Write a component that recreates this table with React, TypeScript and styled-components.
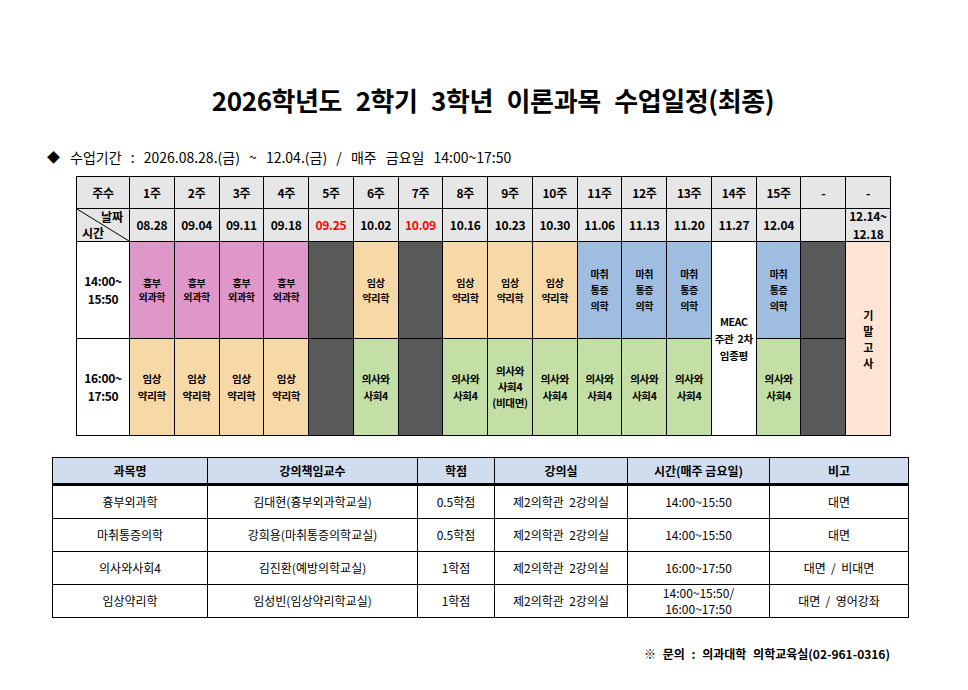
import React from "react";
import styled, { createGlobalStyle } from "styled-components";

const GlobalStyle = createGlobalStyle`
  html, body {
    margin: 0;
    padding: 0;
    background: #ffffff;
  }
  body {
    font-family: "Noto Sans CJK KR", "Noto Sans", sans-serif;
    color: #000000;
  }
`;

const PINK = "#df96c9";
const TAN = "#f6d9a6";
const BLUE = "#9fbde1";
const GREEN = "#c4dfa6";
const DARK = "#595959";
const PEACH = "#fde4d5";
const HEAD = "#e6e6e6";

const Page = styled.div`
  width: 968px;
  min-height: 690px;
  display: flex;
  flex-direction: column;
  padding-top: 86px;
  box-sizing: border-box;
`;

const Title = styled.h1`
  margin: 0;
  padding-left: 18px;
  font-size: 26px;
  line-height: 28px;
  font-weight: 700;
  text-align: center;
  word-spacing: 8px;
  letter-spacing: -0.4px;
`;

const Period = styled.div`
  margin-top: 33px;
  padding-left: 47px;
  font-size: 14px;
  line-height: 20px;
  word-spacing: 6px;
  display: flex;
  align-items: center;
  gap: 10px;
`;

const Diamond = styled.span`
  font-size: 13px;
`;

const Sheet = styled.div`
  margin-top: 9px;
  margin-left: 76px;
  width: 815px;
  box-sizing: border-box;
  display: grid;
  grid-template-columns: 52px repeat(17, 1fr);
  grid-template-rows: 31px 32px 96px 96px;
  gap: 1px;
  background: #000000;
  border: 1px solid #000000;
`;

const Cell = styled.div<{
  $bg: string;
  $span?: boolean;
  $color?: string;
  $size?: number;
  $lh?: number;
}>`
  background: ${(p) => p.$bg};
  color: ${(p) => p.$color || "#000000"};
  grid-row: ${(p) => (p.$span ? "span 2" : "auto")};
  display: flex;
  align-items: center;
  justify-content: center;
  text-align: center;
  white-space: pre-wrap;
  font-weight: 700;
  font-size: ${(p) => p.$size || 12}px;
  line-height: ${(p) => p.$lh || 16}px;
  letter-spacing: -0.3px;
`;

const CornerCell = styled.div`
  position: relative;
  background: ${HEAD};
  display: flex;
  flex-direction: column;
  justify-content: space-between;
  padding: 0 6px 0 5px;
  font-size: 12px;
  font-weight: 700;
  line-height: 14px;
  overflow: hidden;
`;

const CornerTop = styled.span`
  align-self: flex-end;
  margin-top: 1px;
`;

const CornerBottom = styled.span`
  align-self: flex-start;
  margin-bottom: 1px;
`;

const Slash = styled.svg`
  position: absolute;
  inset: 0;
  width: 100%;
  height: 100%;
`;

const InfoTable = styled.table`
  margin-top: 21px;
  margin-left: 52px;
  width: 856px;
  border-collapse: collapse;
  table-layout: fixed;
  font-size: 12px;
`;

const Col = styled.col<{ $w: number }>`
  width: ${(p) => p.$w}px;
`;

const Th = styled.th`
  background: #d0ddee;
  height: 25px;
  padding: 0;
  font-weight: 700;
  border: 1px solid #000000;
  border-bottom: 3px solid #000000;
`;

const Td = styled.td`
  height: 32px;
  padding: 0;
  text-align: center;
  border: 1px solid #000000;
  white-space: pre-wrap;
  line-height: 16px;
`;

const Footer = styled.div`
  margin-top: 26px;
  padding-right: 78px;
  text-align: right;
  font-size: 12px;
  font-weight: 700;
  line-height: 20px;
  word-spacing: 4px;
`;

type Slot = { text?: string; bg: string; span?: boolean; size?: number; lh?: number };

const weeks = ["1주", "2주", "3주", "4주", "5주", "6주", "7주", "8주", "9주", "10주", "11주", "12주", "13주", "14주", "15주", "-", "-"];
const dates = ["08.28", "09.04", "09.11", "09.18", "09.25", "10.02", "10.09", "10.16", "10.23", "10.30", "11.06", "11.13", "11.20", "11.27", "12.04", "", "12.14~\n12.18"];
const redDates = ["09.25", "10.09"];

const chest: Slot = { text: "흉부\n외과학", bg: PINK, size: 10, lh: 14 };
const pharmTop: Slot = { text: "임상\n약리학", bg: TAN, size: 10, lh: 15 };
const pharmBottom: Slot = { text: "임상\n약리학", bg: TAN, size: 10.5, lh: 17 };
const pain: Slot = { text: "마취\n통증\n의학", bg: BLUE, size: 10, lh: 16 };
const society: Slot = { text: "의사와\n사회4", bg: GREEN, size: 10.5, lh: 17 };
const dark: Slot = { bg: DARK };

const slotOne: Slot[] = [
  chest, chest, chest, chest,
  dark, pharmTop, dark, pharmTop, pharmTop, pharmTop,
  pain, pain, pain,
  { text: "MEAC\n주관  2차\n임종평", bg: "#ffffff", span: true, size: 10.5, lh: 17 },
  pain, dark,
  { text: "기\n말\n고\n사", bg: PEACH, span: true, size: 11, lh: 16 },
];

const slotTwo: Slot[] = [
  pharmBottom, pharmBottom, pharmBottom, pharmBottom,
  dark, society, dark, society,
  { text: "의사와\n사회4\n(비대면)", bg: GREEN, size: 10.5, lh: 16 },
  society, society, society, society,
  society, dark,
];

const courses = [
  ["흉부외과학", "김대현(흉부외과학교실)", "0.5학점", "제2의학관  2강의실", "14:00~15:50", "대면"],
  ["마취통증의학", "강희용(마취통증의학교실)", "0.5학점", "제2의학관  2강의실", "14:00~15:50", "대면"],
  ["의사와사회4", "김진환(예방의학교실)", "1학점", "제2의학관  2강의실", "16:00~17:50", "대면  /  비대면"],
  ["임상약리학", "임성빈(임상약리학교실)", "1학점", "제2의학관  2강의실", "14:00~15:50/\n16:00~17:50", "대면  /  영어강좌"],
];

const SlotRow: React.FC<{ label: string; slots: Slot[] }> = ({ label, slots }) => (
  <>
    <Cell $bg="#ffffff" $size={12} $lh={18}>{label}</Cell>
    {slots.map((s, i) => (
      <Cell key={i} $bg={s.bg} $span={s.span} $size={s.size} $lh={s.lh}>
        {s.text}
      </Cell>
    ))}
  </>
);

export default function App() {
  return (
    <Page>
      <GlobalStyle />
      <Title>2026학년도 2학기 3학년 이론과목 수업일정(최종)</Title>
      <Period>
        <Diamond>◆</Diamond>
        <span>수업기간 : 2026.08.28.(금) ~ 12.04.(금) / 매주 금요일 14:00~17:50</span>
      </Period>

      <Sheet>
        <Cell $bg={HEAD}>주수</Cell>
        {weeks.map((w, i) => (
          <Cell key={i} $bg={HEAD}>{w}</Cell>
        ))}

        <CornerCell>
          <Slash viewBox="0 0 100 100" preserveAspectRatio="none">
            <line x1="0" y1="0" x2="100" y2="100" stroke="#000" strokeWidth="1" vectorEffect="non-scaling-stroke" />
          </Slash>
          <CornerTop>날짜</CornerTop>
          <CornerBottom>시간</CornerBottom>
        </CornerCell>
        {dates.map((d, i) => (
          <Cell key={i} $bg={HEAD} $lh={18} $color={redDates.includes(d) ? "#ff0000" : "#000000"}>
            {d}
          </Cell>
        ))}

        <SlotRow label={"14:00~\n15:50"} slots={slotOne} />
        <SlotRow label={"16:00~\n17:50"} slots={slotTwo} />
      </Sheet>

      <InfoTable>
        <colgroup>
          <Col $w={155} />
          <Col $w={210} />
          <Col $w={77} />
          <Col $w={133} />
          <Col $w={142} />
          <Col $w={139} />
        </colgroup>
        <thead>
          <tr>
            <Th>과목명</Th>
            <Th>강의책임교수</Th>
            <Th>학점</Th>
            <Th>강의실</Th>
            <Th>시간(매주 금요일)</Th>
            <Th>비고</Th>
          </tr>
        </thead>
        <tbody>
          {courses.map((row, i) => (
            <tr key={i}>
              {row.map((c, j) => (
                <Td key={j}>{c}</Td>
              ))}
            </tr>
          ))}
        </tbody>
      </InfoTable>

      <Footer>※ 문의 : 의과대학 의학교육실(02-961-0316)</Footer>
    </Page>
  );
}
